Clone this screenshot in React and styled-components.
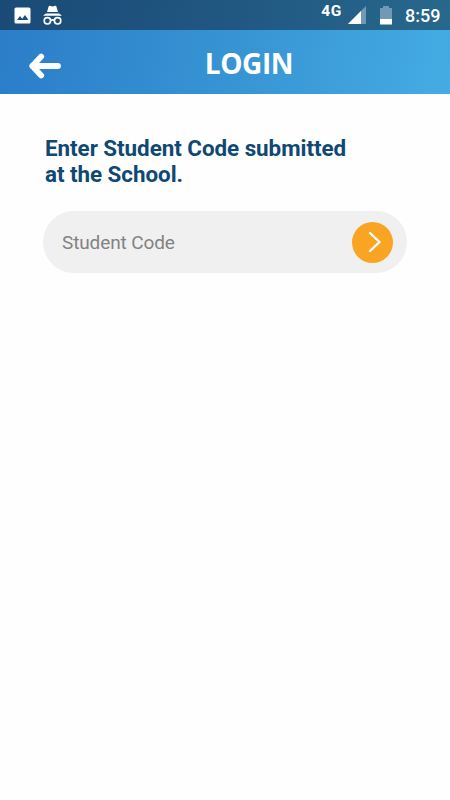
import React, { useState } from "react";
import styled, { createGlobalStyle } from "styled-components";

const GlobalStyle = createGlobalStyle`
  * {
    box-sizing: border-box;
  }

  body {
    margin: 0;
    background-color: #fff;
    font-family: Roboto, sans-serif;
  }
`;

const Screen = styled.div`
  width: 450px;
  height: 800px;
  background-color: #fefefe;
  overflow: hidden;
`;

const StatusBar = styled.div`
  display: flex;
  justify-content: space-between;
  height: 30px;
  padding: 0 10px 0 14px;
  background: linear-gradient(100deg, #1b4a77 0%, #205781 50%, #28688c 100%);
  color: #fff;
`;

const StatusGroup = styled.div`
  display: flex;
  align-items: center;
  height: 30px;
`;

const StatusIcon = styled.svg`
  display: block;
  flex: none;
  margin-left: ${({ $gap }) => $gap || 0}px;
`;

const Network = styled.span`
  font-size: 15.5px;
  font-weight: 700;
  line-height: 23px;
  letter-spacing: 0.7px;
  align-self: flex-start;
`;

const Clock = styled.span`
  width: 35px;
  margin-left: 13px;
  font-size: 18px;
  font-weight: 500;
  line-height: 30px;
  padding-top: 2px;
  white-space: nowrap;
`;

const Header = styled.header`
  display: grid;
  grid-template-columns: 75px 1fr 27px;
  align-items: center;
  height: 64px;
  background: linear-gradient(100deg, #2b7dc8 0%, #3793d3 50%, #44ace3 100%);
`;

const BackButton = styled.button`
  display: flex;
  padding: 7px 0 0 28px;
  border: none;
  background: none;
  cursor: pointer;
`;

const Title = styled.h1`
  margin: 0;
  padding: 1px 0 0;
  color: #fff;
  font-family: "Open Sans", sans-serif;
  font-size: 28px;
  font-weight: 700;
  line-height: 38px;
  letter-spacing: -0.4px;
  text-align: center;
`;

const Form = styled.form`
  padding: 41px 43px 0;
`;

const Label = styled.label`
  display: block;
  padding-left: 2px;
  color: #0f4873;
  font-size: 22.4px;
  font-weight: 700;
  line-height: 26px;
  letter-spacing: -0.04px;
`;

const InputArea = styled.div`
  display: flex;
  align-items: center;
  height: 62px;
  margin-top: 24px;
  padding: 0 14px 0 19px;
  border-radius: 31px;
  background-color: #f0f0f0;
`;

const Input = styled.input`
  flex: 1;
  min-width: 0;
  height: 40px;
  padding: 1px 0 0;
  border: none;
  outline: none;
  background: none;
  color: #444;
  font-family: Roboto, sans-serif;
  font-size: 19px;
  letter-spacing: -0.12px;

  &::placeholder {
    color: #828282;
    opacity: 1;
  }
`;

const SubmitButton = styled.button`
  display: flex;
  align-items: center;
  justify-content: center;
  width: 41px;
  height: 41px;
  padding: 0 0 0 4px;
  border: none;
  border-radius: 50%;
  background-color: #faa423;
  cursor: pointer;
`;

const PictureIcon = () => (
  <StatusIcon width="17" height="17" viewBox="0 0 17 17">
    <rect x="0.5" y="0.5" width="16" height="16" rx="1.5" fill="#fff" />
    <path d="M3 13l3-4 2.2 2.7L11 8l3.4 5z" fill="#1c4c78" />
  </StatusIcon>
);

const IncognitoIcon = () => (
  <StatusIcon $gap={11} width="21" height="21" viewBox="0 0 21 21">
    <path d="M5 7L6.7 1.2Q7 .6 7.7.8L10.5 1.5 13.3.8Q14 .6 14.3 1.2L16 7z" fill="#fff" />
    <path d="M1 10.8Q1.8 9.6 4 8.4H17Q19.2 9.6 20 10.8z" fill="#fff" />
    <g fill="none" stroke="#fff" strokeWidth="1.7">
      <circle cx="5.4" cy="15.8" r="3.2" />
      <circle cx="15.6" cy="15.8" r="3.2" />
      <path d="M8.5 15.5q2-1.2 4 0" />
    </g>
  </StatusIcon>
);

const SignalIcon = () => (
  <StatusIcon $gap={6} width="18" height="18" viewBox="0 0 18 18">
    <path d="M0 18L18 0V18z" fill="#7199b5" />
    <path d="M0 18L13 5V18z" fill="#fff" />
  </StatusIcon>
);

const BatteryIcon = () => (
  <StatusIcon $gap={14} width="12" height="19" viewBox="0 0 12 19">
    <path d="M0 2.5Q0 2 .7 2H3V0H9V2H11.3Q12 2 12 2.5V14H0z" fill="#7199b5" />
    <path d="M0 13H12V18Q12 18.5 11.5 18.5H.5Q0 18.5 0 18z" fill="#fff" />
  </StatusIcon>
);

const App = () => {
  const [code, setCode] = useState("");

  const handleSubmit = (e) => {
    e.preventDefault();
  };

  return (
    <Screen>
      <GlobalStyle />
      <StatusBar>
        <StatusGroup>
          <PictureIcon />
          <IncognitoIcon />
        </StatusGroup>
        <StatusGroup>
          <Network>4G</Network>
          <SignalIcon />
          <BatteryIcon />
          <Clock>8:59</Clock>
        </StatusGroup>
      </StatusBar>

      <Header>
        <BackButton type="button" aria-label="Back">
          <svg width="34" height="26" viewBox="0 0 34 26">
            <path
              d="M30 13H4.3M13.2 3.6L4.3 13L13.2 22.4"
              fill="none"
              stroke="#fff"
              strokeWidth="5.8"
              strokeLinecap="round"
              strokeLinejoin="round"
            />
          </svg>
        </BackButton>
        <Title>LOGIN</Title>
      </Header>

      <Form onSubmit={handleSubmit}>
        <Label htmlFor="student_code">
          Enter Student Code submitted
          <br />
          at the School.
        </Label>
        <InputArea>
          <Input
            id="student_code"
            name="student_code"
            placeholder="Student Code"
            value={code}
            onChange={(e) => setCode(e.target.value)}
          />
          <SubmitButton type="submit" aria-label="Submit">
            <svg width="14" height="22" viewBox="0 0 14 22">
              <path
                d="M2 2L11.5 11L2 20"
                fill="none"
                stroke="#fff"
                strokeWidth="2.4"
                strokeLinecap="round"
                strokeLinejoin="round"
              />
            </svg>
          </SubmitButton>
        </InputArea>
      </Form>
    </Screen>
  );
};

export default App;
